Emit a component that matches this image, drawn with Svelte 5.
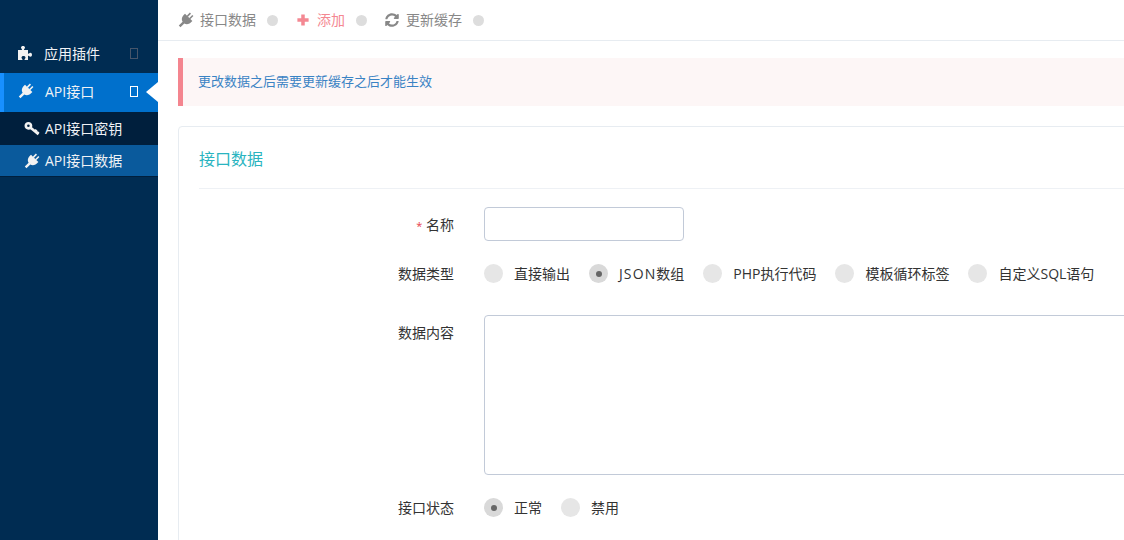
<script>
  const plug = "M5.5 0h1.6v4.2H5.5zM8.9 0h1.6v4.2H8.9zM2.8 4.2h10.4v2.2c0 2.9-2 4.8-4 5.2V17H6.8v-5.4c-2-.4-4-2.3-4-5.2z";
  const sync = "M370.72 133.28C339.458 104.008 298.888 87.962 255.848 88c-77.458.068-144.328 53.178-162.791 126.85-1.344 5.363-6.122 9.15-11.651 9.15H24.103c-7.498 0-13.194-6.807-11.807-14.176C33.933 94.924 134.813 8 256 8c66.448 0 126.791 26.136 171.315 68.685L463.03 40.97C478.149 25.851 504 36.559 504 57.941V192c0 13.255-10.745 24-24 24H345.941c-21.382 0-32.09-25.851-16.971-40.971l41.75-41.749zM32 296h134.059c21.382 0 32.09 25.851 16.971 40.971l-41.75 41.75c31.262 29.273 71.835 45.319 114.876 45.28 77.418-.07 144.315-53.144 162.787-126.849 1.344-5.363 6.122-9.15 11.651-9.15h57.304c7.498 0 13.194 6.807 11.807 14.176C478.067 417.076 377.187 504 256 504c-66.448 0-126.791-26.136-171.315-68.685L48.97 471.03C33.851 486.149 8 475.441 8 454.059V320c0-13.255 10.745-24 24-24z";
  const puzzle = "M1 5h3.5c.6 0 .6-.6.2-1C4.3 3.5 4 3.2 4 2.6 4 1.7 4.8 1 6 1s2 .7 2 1.6c0 .6-.3.9-.7 1.4-.4.4-.4 1 .2 1H11v3.3c0 .6.6.6 1 .2.5-.4.8-.7 1.4-.7.9 0 1.6.8 1.6 2s-.7 2-1.6 2c-.6 0-.9-.3-1.4-.7-.4-.4-1-.4-1 .2V15H8c-.6 0-.6-.6-.2-1 .4-.5.7-.8.7-1.4 0-.9-.8-1.6-2-1.6s-2 .7-2 1.6c0 .6.3.9.7 1.4.4.4.4 1-.2 1H1z";
  const types = [
    { latin: "", label: "直接输出", on: false },
    { latin: "JSON", label: "数组", on: true },
    { latin: "", label: "PHP执行代码", on: false },
    { latin: "", label: "模板循环标签", on: false },
    { latin: "", label: "自定义SQL语句", on: false }
  ];
</script>

{#snippet plugIcon(cls)}
  <svg class={cls} viewBox="0 0 16 16" aria-hidden="true"><path transform="rotate(45 8 8)" d={plug} /></svg>
{/snippet}

<div class="page">
  <aside class="side">
    <div class="item">
      <svg class="ic" viewBox="0 0 16 16" aria-hidden="true"><path d={puzzle} /></svg>
      <span class="tx">应用插件</span>
      <span class="tofu dim"></span>
    </div>
    <div class="item open">
      {@render plugIcon("ic")}
      <span class="tx">API接口</span>
      <span class="tofu"></span>
      <span class="notch"></span>
    </div>
    <div class="sub">
      <div class="subitem">
        <svg class="ic2 key" viewBox="0 0 16 16" aria-hidden="true">
          <circle cx="4.4" cy="4.8" r="2.6" />
          <path d="M6.6 6.8l7.9 6.4M11 10.4l1.6-1.6M13.2 12.2l1.4-1.4" />
        </svg>
        <span>API接口密钥</span>
      </div>
      <div class="subitem active">
        {@render plugIcon("ic2")}
        <span>API接口数据</span>
      </div>
    </div>
  </aside>

  <main class="main">
    <nav class="crumbs">
      <a class="crumb">{@render plugIcon("ci big")}<span>接口数据</span></a>
      <i class="dot"></i>
      <a class="crumb pink">
        <svg class="ci" viewBox="0 0 16 16" aria-hidden="true"><path d="M6 1.6h4v4.4h4.4v4H10v4.4H6V10H1.6V6H6z" /></svg>
        <span>添加</span>
      </a>
      <i class="dot"></i>
      <a class="crumb">
        <svg class="ci" viewBox="0 0 512 512" aria-hidden="true"><path d={sync} /></svg>
        <span>更新缓存</span>
      </a>
      <i class="dot"></i>
    </nav>

    <div class="body">
      <div class="alert">更改数据之后需要更新缓存之后才能生效</div>

      <section class="card">
        <h2 class="title">接口数据</h2>
        <div class="form">
          <div class="row r-name">
            <label class="lab"><em>*</em> 名称</label>
            <input class="input" type="text" />
          </div>
          <div class="row r-type">
            <span class="lab">数据类型</span>
            <div class="radios">
              {#each types as t}
                <span class="radio"><i class="rd" class:on={t.on}></i><span>{#if t.latin}<span class="latin">{t.latin}</span>{/if}{t.label}</span></span>
              {/each}
            </div>
          </div>
          <div class="row r-text">
            <span class="lab">数据内容</span>
            <textarea class="area"></textarea>
          </div>
          <div class="row r-state">
            <span class="lab">接口状态</span>
            <div class="radios">
              <span class="radio"><i class="rd on"></i><span>正常</span></span>
              <span class="radio"><i class="rd"></i><span>禁用</span></span>
            </div>
          </div>
        </div>
      </section>
    </div>
  </main>
</div>

<style>
  :global(body) {
    margin: 0;
    background: #fff;
    overflow: hidden;
  }
  .page {
    display: flex;
    width: 1124px;
    height: 540px;
    overflow: hidden;
    font-family: "Open Sans", "Noto Sans CJK SC", sans-serif;
    font-size: 14px;
    color: #333;
  }
  .side {
    flex: 0 0 158px;
    background: #002c52;
    padding-top: 35px;
    color: #fff;
  }
  .item {
    position: relative;
    display: flex;
    align-items: center;
    box-sizing: border-box;
    height: 38px;
    padding: 0 0 3px 17px;
    font-size: 14px;
    color: #f0f2f5;
  }
  .item.open {
    height: 39px;
    padding-left: 18px;
    background: #0070cc;
    box-shadow: inset 4px 0 0 #1890ff;
  }
  .ic {
    width: 16px;
    height: 16px;
    fill: #f2f2f2;
    flex: none;
  }
  .tx {
    margin-left: 11px;
  }
  .tofu {
    position: absolute;
    left: 130px;
    top: 13px;
    width: 6px;
    height: 9px;
    border: 1px solid #fff;
  }
  .tofu.dim {
    border-color: #46556a;
  }
  .notch {
    position: absolute;
    right: 0;
    top: 9px;
    border-style: solid;
    border-color: transparent #fff transparent transparent;
    border-width: 10px 12px 10px 0;
  }
  .sub {
    background: #001f3d;
    padding-bottom: 1px;
  }
  .subitem {
    display: flex;
    align-items: center;
    box-sizing: border-box;
    height: 33px;
    padding: 0 0 2px 24px;
    gap: 5px;
    font-size: 14px;
    color: #f0f2f5;
  }
  .subitem.active {
    height: 31px;
    background: #0a5a9c;
  }
  .ic2 {
    width: 16px;
    height: 16px;
    margin-top: 2px;
    fill: #f2f2f2;
    flex: none;
  }
  .ic2.key {
    fill: none;
    stroke: #f2f2f2;
    stroke-width: 2.6;
  }
  .main {
    flex: 1;
    min-width: 0;
  }
  .crumbs {
    display: flex;
    align-items: center;
    height: 40px;
    border-bottom: 1px solid #e7ecf1;
    padding-left: 21px;
    color: #888;
  }
  .crumb {
    display: flex;
    align-items: center;
    gap: 7px;
  }
  .crumb span {
    margin-bottom: 2px;
  }
  .crumb.pink {
    color: #f48892;
  }
  .ci {
    width: 14px;
    height: 14px;
    fill: currentColor;
    flex: none;
  }
  .ci.big {
    width: 16px;
    height: 16px;
    margin: 0 -1px;
  }
  .dot {
    width: 11px;
    height: 11px;
    border-radius: 50%;
    background: #ddd;
    margin: 0 18px 0 11px;
  }
  .body {
    width: 1100px;
    padding: 17px 0 0 20px;
  }
  .alert {
    height: 48px;
    line-height: 47px;
    box-sizing: border-box;
    border-left: 5px solid #f4858f;
    background: #fdf6f6;
    padding-left: 15px;
    font-size: 13px;
    color: #3a83c4;
  }
  .card {
    margin-top: 20px;
    border: 1px solid #e7ecf1;
    border-radius: 4px;
    padding: 0 20px;
    height: 500px;
  }
  .title {
    margin: 0;
    height: 61px;
    line-height: 65px;
    border-bottom: 1px solid #eef1f5;
    font-size: 16px;
    font-weight: 400;
    color: #2ab4c0;
  }
  .form {
    padding-top: 18px;
  }
  .row {
    display: flex;
    align-items: flex-start;
  }
  .lab {
    flex: 0 0 255px;
    box-sizing: border-box;
    height: 34px;
    text-align: right;
    line-height: 33px;
    color: #333;
    margin-right: 30px;
    white-space: nowrap;
  }
  .r-name .lab,
  .r-text .lab {
    line-height: 35px;
  }
  .lab em {
    font-style: normal;
    font-size: 11px;
    color: #e73d4a;
  }
  .input {
    box-sizing: border-box;
    width: 200px;
    height: 34px;
    border: 1px solid #c2cad8;
    border-radius: 4px;
    background: #fff;
    padding: 0;
  }
  .r-type {
    margin-top: 16px;
    height: 58px;
  }
  .radios {
    display: flex;
    gap: 19px;
    line-height: 33px;
  }
  .radio {
    display: flex;
    align-items: center;
    gap: 11px;
    height: 33px;
  }
  .latin {
    letter-spacing: 1.1px;
  }
  .rd {
    position: relative;
    width: 19px;
    height: 19px;
    border-radius: 50%;
    background: #e6e6e6;
    flex: none;
  }
  .rd.on {
    background: #d9d9d9;
  }
  .rd.on::after {
    content: "";
    position: absolute;
    left: 6.5px;
    top: 6.5px;
    width: 6px;
    height: 6px;
    border-radius: 50%;
    background: #666;
  }
  .area {
    display: block;
    box-sizing: border-box;
    width: 800px;
    height: 160px;
    border: 1px solid #c2cad8;
    border-radius: 4px;
    background: #fff;
    padding: 0;
    resize: none;
  }
  .r-state {
    margin-top: 16px;
  }
</style>
